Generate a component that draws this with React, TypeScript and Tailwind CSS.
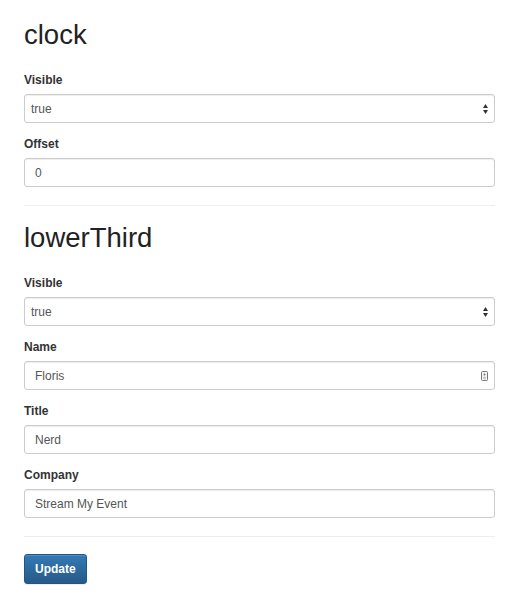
import React from 'react';

const SelectArrows = () => (
  <svg width="5" height="10" viewBox="0 0 5 10" className="absolute right-[7px] top-1/2 -translate-y-1/2 pointer-events-none">
    <polygon points="2.5,0 5,4 0,4" fill="#333" />
    <polygon points="0,6 5,6 2.5,10" fill="#333" />
  </svg>
);

const ContactIcon = () => (
  <svg width="7" height="10" viewBox="0 0 7 10" className="absolute right-[7px] top-1/2 -translate-y-1/2 pointer-events-none">
    <rect x="0.5" y="0.5" width="6" height="9" rx="1" fill="#f4f4f4" stroke="#777" />
    <circle cx="3.5" cy="3.6" r="1" fill="#777" />
    <path d="M2 6.6 Q3.5 4.9 5 6.6 Z" fill="#777" />
    <line x1="2" y1="7.7" x2="5" y2="7.7" stroke="#aaa" strokeWidth="0.6" />
  </svg>
);

const inputClass =
  'block w-full h-[29px] border border-[#ccc] rounded-[3px] bg-white text-[12px] text-[#555] shadow-[inset_0_1px_1px_rgba(0,0,0,0.075)] outline-none';

const Field = ({ label, children }: { label: string; children: React.ReactNode }) => (
  <div className="mb-[13px]">
    <label className="block mb-[5px] font-bold leading-[17px]">{label}</label>
    {children}
  </div>
);

const SelectField = ({ label, value }: { label: string; value: string }) => (
  <Field label={label}>
    <div className="relative">
      <select defaultValue={value} className={`${inputClass} appearance-none pl-[6px] pr-[20px]`}>
        <option value="true">true</option>
        <option value="false">false</option>
      </select>
      <SelectArrows />
    </div>
  </Field>
);

const TextField = ({ label, value, contact }: { label: string; value: string; contact?: boolean }) => (
  <Field label={label}>
    <div className="relative">
      <input readOnly defaultValue={value} className={`${inputClass} px-[10px]`} />
      {contact && <ContactIcon />}
    </div>
  </Field>
);

export default function App() {
  return (
    <div className="px-[24px] pt-[3px] pb-[16px] bg-white text-[12px] text-[#333] font-['Liberation_Sans',Arial,sans-serif]">
      <h2 className="mt-[17px] mb-[23px] text-[27.5px] leading-[29px] font-normal text-[#222]">clock</h2>
      <SelectField label="Visible" value="true" />
      <TextField label="Offset" value="0" />

      <hr className="mt-[18px] mb-[17px] border-0 border-t border-[#eee]" />

      <h2 className="mt-[17px] mb-[23px] text-[27.5px] leading-[29px] font-normal text-[#222]">lowerThird</h2>
      <SelectField label="Visible" value="true" />
      <TextField label="Name" value="Floris" contact />
      <TextField label="Title" value="Nerd" />
      <TextField label="Company" value="Stream My Event" />

      <hr className="mt-[18px] mb-[17px] border-0 border-t border-[#eee]" />

      <button className="h-[30px] px-[10px] border border-[#245580] rounded-[3px] bg-linear-to-b from-[#337ab7] to-[#265a88] text-white text-[12px] font-semibold shadow-[inset_0_1px_0_rgba(255,255,255,0.15),0_1px_1px_rgba(0,0,0,0.075)]">
        Update
      </button>
    </div>
  );
}
